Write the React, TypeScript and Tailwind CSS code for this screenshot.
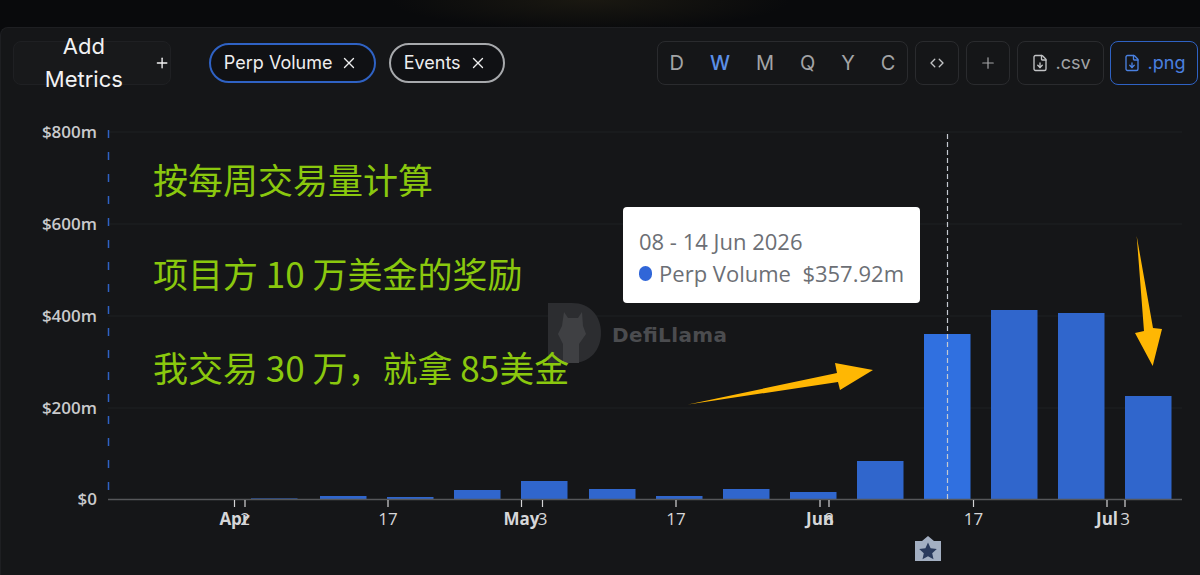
import { ChevronsLeftRight, FileDown, Plus, X } from "lucide-react";

const bars = [
	{ x: 251, top: 498.4 },
	{ x: 320, top: 496 },
	{ x: 387, top: 497 },
	{ x: 454, top: 490 },
	{ x: 521, top: 481 },
	{ x: 589, top: 489 },
	{ x: 656, top: 496 },
	{ x: 723, top: 489 },
	{ x: 790, top: 492 },
	{ x: 857, top: 461 },
	{ x: 924, top: 334 },
	{ x: 991, top: 310 },
	{ x: 1058, top: 313 },
	{ x: 1125, top: 396 },
];

const yLabels = [
	{ y: 132, label: "$800m" },
	{ y: 224, label: "$600m" },
	{ y: 316, label: "$400m" },
	{ y: 408, label: "$200m" },
	{ y: 499, label: "$0" },
];

const xLabels = [
	{ x: 234.5, label: "Apr", bold: true },
	{ x: 245, label: "2", bold: false },
	{ x: 388, label: "17", bold: false },
	{ x: 521.5, label: "May", bold: true },
	{ x: 542.5, label: "3", bold: false },
	{ x: 676, label: "17", bold: false },
	{ x: 820, label: "Jun", bold: true },
	{ x: 829, label: "8", bold: false },
	{ x: 973.5, label: "17", bold: false },
	{ x: 1107, label: "Jul", bold: true },
	{ x: 1125, label: "3", bold: false },
];

const ranges = ["D", "W", "M", "Q", "Y", "C"];

function Chart() {
	return (
		<svg className="block h-[475px] w-[1200px]" viewBox="0 100 1200 475">
			{yLabels.slice(0, 4).map((l) => (
				<line key={l.y} x1="108" x2="1182" y1={l.y} y2={l.y} stroke="#1f2023" strokeWidth="1" />
			))}
			{yLabels.map((l) => (
				<text
					key={l.label}
					x="97"
					y={l.y + 6}
					textAnchor="end"
					fontSize="17"
					fontWeight="600"
					fill="#c9cacc"
					fontFamily="'Open Sans', sans-serif"
				>
					{l.label}
				</text>
			))}
			<line x1="108.5" x2="108.5" y1="130" y2="499" stroke="#2f62c4" strokeWidth="1.5" strokeDasharray="8 14" />
			{bars.map((b, i) => (
				<rect
					key={b.x}
					x={b.x}
					y={b.top}
					width="46.5"
					height={499 - b.top}
					fill={i === 10 ? "#3070e0" : "#3066cc"}
				/>
			))}
			<line x1="108" x2="1182" y1="499.5" y2="499.5" stroke="#56575a" strokeWidth="1.5" />
			<line x1="947.5" x2="947.5" y1="134" y2="499" stroke="#c4c8d0" strokeWidth="1.2" strokeDasharray="5 3" />
			{xLabels.map((l) => (
				<g key={`${l.label}-${l.x}`}>
					<line x1={l.x} x2={l.x} y1="500" y2="507" stroke="#d4d4d6" strokeWidth="1.2" />
					<text
						x={l.x}
						y="525"
						textAnchor="middle"
						fontSize="17"
						fontWeight={l.bold ? 700 : 400}
						fill="#d6d6d8"
						fontFamily="'Open Sans', sans-serif"
					>
						{l.label}
					</text>
				</g>
			))}
			{/* event marker */}
			<path d="M915 541 L922 541 L928 536 L934 541 L941 541 L941 561 L915 561 Z" fill="#a3afc2" />
			<path
				d="M928 542.5 L930.6 548.3 L936.8 549 L932.2 553.2 L933.5 559.3 L928 556.2 L922.5 559.3 L923.8 553.2 L919.2 549 L925.4 548.3 Z"
				fill="#2a3a5c"
			/>
			{/* hand drawn arrows */}
			<polygon points="688,404.5 837,373 835,363 873,370 840,390 838,382" fill="#ffb703" />
			<polygon points="1136.7,236 1144,331 1135,333 1152.7,366 1162,329 1153,328" fill="#ffb703" />
			{/* watermark logo */}
			<path d="M548 303 L572 303 C590 303 601 316 601 333 C601 350 590 363 572 363 L548 363 Z" fill="#2c2d30" />
			<path
				d="M564 312 L568 318 L578 318 L582 312 L583 326 L586 334 L579 344 L579 363 L563 363 L563 344 L558 334 L562 326 Z"
				fill="#3f4043"
			/>
			<text
				x="612"
				y="342"
				fontSize="20"
				fontWeight="700"
				fill="#4b4c4f"
				fontFamily="'DejaVu Sans', sans-serif"
				textLength="115"
			>
				DefiLlama
			</text>
		</svg>
	);
}

export default function App() {
	return (
		<div className="flex h-[575px] w-[1200px] flex-col overflow-hidden bg-[#090a0c] bg-[radial-gradient(ellipse_200px_30px_at_590px_0px,#1a1811,transparent)] font-['Inter',sans-serif]">
			<div className="mt-[27px] flex min-h-0 flex-1 flex-col rounded-tl-lg border-t border-l border-[#1e1f22] bg-[#151618]">
				<div className="flex items-center pl-3 pr-[2px] pt-[13px]">
					<button className="flex h-11 w-[158px] items-center gap-[13px] rounded-lg border border-[#1f2023] bg-[#18191b] pl-[13px] text-[22px] text-[#f2f2f3]">
						Add Metrics
						<Plus className="h-[18px] w-[18px]" strokeWidth={2} />
					</button>
					<div className="ml-[38px] flex h-10 w-[167px] items-center gap-2 rounded-full border-[2.5px] border-[#2f62c4] bg-[#101114] pl-[13px] text-lg text-[#eeeeef]">
						Perp Volume
						<X className="h-[18px] w-[18px]" strokeWidth={1.8} />
					</div>
					<div className="ml-[13px] flex h-10 w-[116px] items-center gap-2 rounded-full border-[2.5px] border-[#a7a9ac] bg-[#101114] pl-[13px] text-lg text-[#eeeeef]">
						Events
						<X className="h-[18px] w-[18px]" strokeWidth={1.8} />
					</div>
					<div className="ml-[152px] flex h-11 w-[252px] items-center justify-between rounded-lg border border-[#2a2b2e] px-3 text-xl text-[#a3a4a6]">
						{ranges.map((r) => (
							<span key={r} className={r === "W" ? "font-medium text-[#5b8fe6]" : ""}>
								{r}
							</span>
						))}
					</div>
					<div className="ml-[7px] flex h-11 w-11 items-center justify-center rounded-lg border border-[#2a2b2e] text-[#c2c3c5]">
						<ChevronsLeftRight className="h-[18px] w-[18px]" strokeWidth={1.8} />
					</div>
					<div className="ml-[7px] flex h-11 w-11 items-center justify-center rounded-lg border border-[#2a2b2e] text-[#a3a4a6]">
						<Plus className="h-[18px] w-[18px]" strokeWidth={1.6} />
					</div>
					<div className="ml-[7px] flex h-11 w-[87px] items-center justify-center gap-[7px] rounded-lg border border-[#2a2b2e] text-lg text-[#a3a4a6]">
						<FileDown className="h-[18px] w-[18px] text-[#c2c3c5]" strokeWidth={1.8} />
						.csv
					</div>
					<div className="ml-[6px] flex h-11 w-[88px] items-center justify-center gap-[7px] rounded-lg border border-[#2f62c4] text-lg text-[#4a80e0]">
						<FileDown className="h-[18px] w-[18px]" strokeWidth={1.8} />
						.png
					</div>
				</div>
				<div className="relative mt-auto -ml-px">
					<Chart />
					<div className="absolute left-[153px] top-[56px] flex flex-col gap-[48px] font-['Noto_Sans_CJK_SC',sans-serif] text-[35px] leading-[46px] text-[#8ac80e]">
						<p>按每周交易量计算</p>
						<p>项目方 10 万美金的奖励</p>
						<p>我交易 30 万，就拿 85美金</p>
					</div>
					<div className="absolute left-[623px] top-[107px] h-[96px] w-[297px] rounded-[4px] bg-white px-4 pt-[18px] font-['Open_Sans',sans-serif] text-[22px] leading-[32px] text-[#6c6f75]">
						<p>08 - 14 Jun 2026</p>
						<div className="flex items-center gap-[7px] whitespace-pre">
							<span className="h-[15px] w-[15px] rounded-full bg-[#3066d8]" />
							<span>Perp Volume  $357.92m</span>
						</div>
					</div>
				</div>
			</div>
		</div>
	);
}
